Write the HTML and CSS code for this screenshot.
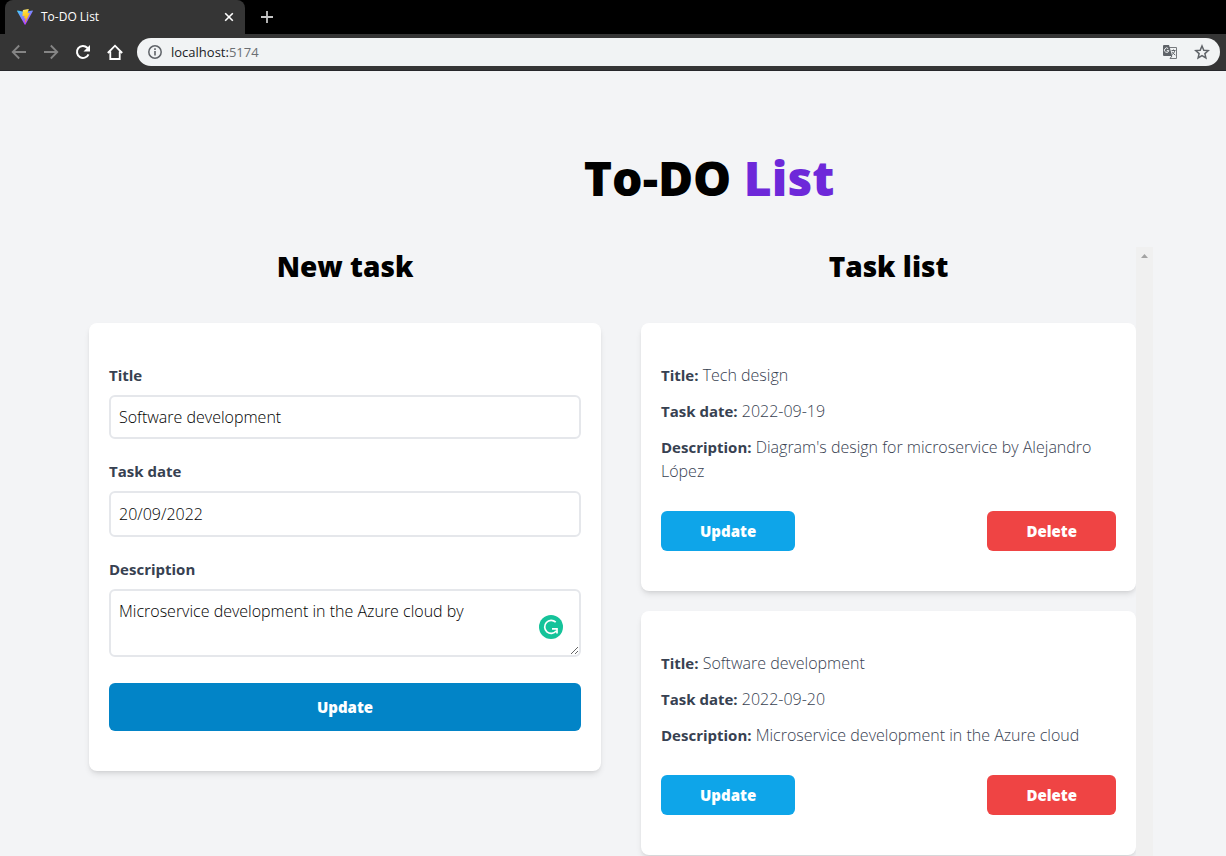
FILE: index.html
```html
<!DOCTYPE html>
<html lang="en">
<head>
<meta charset="utf-8">
<title>To-DO List</title>
<link rel="stylesheet" href="styles.css">
</head>
<body>
<header class="browser">
  <div class="tabs">
    <div class="tab">
      <svg class="tab-logo" width="16" height="16" viewBox="0 0 32 32" aria-hidden="true">
        <defs>
          <linearGradient id="v" x1="0" y1="0" x2="0.6" y2="1"><stop offset="0" stop-color="#41d1ff"/><stop offset="1" stop-color="#bd34fe"/></linearGradient>
          <linearGradient id="b" x1="0.4" y1="0" x2="0.6" y2="1"><stop offset="0" stop-color="#ffea83"/><stop offset="0.2" stop-color="#ffdd35"/><stop offset="1" stop-color="#ffa800"/></linearGradient>
        </defs>
        <path fill="url(#v)" d="M31.6 4.7 17 30.9a1 1 0 0 1-1.8 0L.3 4.7a1 1 0 0 1 1.1-1.5L16 5.8 30.500 3.200a1 1 0 0 1 1.100 1.500z"/>
        <path fill="url(#b)" d="M22.900 0 12.100 2.100a.5.5 0 0 0-.4.500L11 13.800a.5.5 0 0 0 .6.500l3-.7a.5.5 0 0 1 .6.600l-.9 4.400a.5.5 0 0 0 .6.600l1.900-.6a.5.5 0 0 1 .6.600l-1.400 6.900c-.1.400.5.700.8.300L25.300 8.800a.5.5 0 0 0-.5-.8l-3.100.6a.5.5 0 0 1-.6-.6L23.500.6a.5.5 0 0 0-.6-.6z"/>
      </svg>
      <span class="tab-title">To-DO List</span>
      <button class="icon-button tab-close" aria-label="Close tab">
        <svg width="10" height="10" viewBox="0 0 10 10"><path d="M1.200 1.200l7.600 7.600M8.800 1.200L1.200 8.800" stroke="#fff" stroke-width="1.600"/></svg>
      </button>
    </div>
    <button class="icon-button new-tab" aria-label="New tab">
      <svg width="12" height="12" viewBox="0 0 12 12"><path d="M6 0v12M0 6h12" stroke="#c4c4c4" stroke-width="1.800"/></svg>
    </button>
  </div>
  <nav class="toolbar">
    <button class="icon-button" aria-label="Back"><svg width="16" height="16" viewBox="0 0 16 16" fill="none" stroke="#858585" stroke-width="1.800"><path d="M15 8H2M8.200 1.500L1.700 8l6.500 6.500"/></svg></button>
    <button class="icon-button" aria-label="Forward"><svg width="16" height="16" viewBox="0 0 16 16" fill="none" stroke="#858585" stroke-width="1.800"><path d="M1 8h13M7.800 1.500L14.300 8l-6.500 6.500"/></svg></button>
    <button class="icon-button" aria-label="Reload"><svg width="16" height="16" viewBox="0 0 16 16"><path d="M13.500 10.300A6 6 0 1 1 12.300 3.800L14 5.500" fill="none" stroke="#fff" stroke-width="2"/><path d="M15 1v6.500H8.500z" fill="#fff"/></svg></button>
    <button class="icon-button" aria-label="Home"><svg width="16" height="16" viewBox="0 0 16 16" fill="none" stroke="#fff" stroke-width="1.800"><path d="M.8 9L8 1.700 15.200 9M3.300 7.500V15h9.400V7.500"/></svg></button>
    <div class="address">
      <svg width="14" height="14" viewBox="0 0 14 14" aria-hidden="true"><circle cx="7" cy="7" r="6.200" fill="none" stroke="#5f6368" stroke-width="1.500"/><path d="M7 6v4.500M7 3.300v1.600" stroke="#5f6368" stroke-width="1.600"/></svg>
      <span class="url">localhost:<span class="port">5174</span></span>
      <button class="icon-button" aria-label="Translate this page">
        <svg width="14" height="14" viewBox="0 0 14 14"><path d="M6 2.500h7.500v11H7" fill="none" stroke="#777a7e"/><path d="M1 0h5l3.200 11H1a1 1 0 0 1-1-1V1a1 1 0 0 1 1-1z" fill="#5f6368"/><path d="M5.200 3.600a2.200 2.200 0 1 0 .6 2H3.800" fill="none" stroke="#f1f3f4"/><path d="M8.500 5.500h4M10.500 4.500v1M11.800 5.500c-.4 2-1.300 3-2.600 4M9.300 6.800c.6 1.300 1.600 2.500 3 3.300M7 13.500L9 11" fill="none" stroke="#5f6368"/></svg>
      </button>
      <button class="icon-button" aria-label="Bookmark this page">
        <svg width="16" height="16" viewBox="0 0 16 16"><path d="M8 2l1.800 4.200 4.500.4-3.400 3 1 4.400L8 11.700 4.100 14l1-4.400-3.400-3 4.500-.4z" fill="none" stroke="#5f6368" stroke-width="1.500"/></svg>
      </button>
    </div>
  </nav>
</header>

<main class="page">
  <h1 class="page-title">To-DO <span class="accent">List</span></h1>
  <div class="columns">
    <section class="column">
      <h2 class="column-title">New task</h2>
      <form class="card">
        <div class="field">
          <label class="label" for="title">Title</label>
          <input class="control" id="title" type="text" value="Software development">
        </div>
        <div class="field">
          <label class="label" for="date">Task date</label>
          <input class="control control-date" id="date" type="text" value="20/09/2022">
        </div>
        <div class="field field-description">
          <label class="label" for="description">Description</label>
          <textarea class="control control-area" id="description" rows="2" spellcheck="false">Microservice development in the Azure cloud by</textarea>
          <svg class="checker" width="24" height="24" viewBox="0 0 24 24" aria-hidden="true"><circle cx="12" cy="12" r="12" fill="#15c39a"/><path d="M16.700 7.200A6.500 6.500 0 1 0 17.200 16M13 13.800h5v4.700" fill="none" stroke="#fff" stroke-width="1.700"/></svg>
        </div>
        <button class="button submit" type="button">Update</button>
      </form>
    </section>
    <section class="column list-column">
      <div class="list">
        <h2 class="column-title">Task list</h2>
        <article class="card task">
          <p class="line"><strong>Title:</strong> Tech design</p>
          <p class="line"><strong>Task date:</strong> 2022-09-19</p>
          <p class="line"><strong>Description:</strong> Diagram's design for microservice by Alejandro López</p>
          <div class="actions"><button class="button update">Update</button><button class="button delete">Delete</button></div>
        </article>
        <article class="card task">
          <p class="line"><strong>Title:</strong> Software development</p>
          <p class="line"><strong>Task date:</strong> 2022-09-20</p>
          <p class="line"><strong>Description:</strong> Microservice development in the Azure cloud</p>
          <div class="actions"><button class="button update">Update</button><button class="button delete">Delete</button></div>
        </article>
      </div>
      <div class="scrollbar" aria-hidden="true"><svg width="7" height="4" viewBox="0 0 7 4"><path d="M0 4L3.500 0 7 4z" fill="#a3a3a3"/></svg></div>
    </section>
  </div>
</main>
</body>
</html>
```
FILE: styles.css
```css
* { box-sizing: border-box; }

body {
  display: flex;
  flex-direction: column;
  height: 100vh;
  margin: 0;
  overflow: hidden;
  background: #f3f4f6;
  color: #000;
  font-family: "Open Sans", "Noto Sans", sans-serif;
  font-size: 15px;
  line-height: 24px;
}

h1, h2, p { margin: 0; }

button, input, textarea { font: inherit; }

svg { display: block; flex: none; }

.icon-button {
  display: flex;
  padding: 0;
  border: 0;
  background: none;
}

/* Browser frame */
.browser {
  flex: none;
  background: #000;
  font-size: 12px;
}

.tabs {
  display: flex;
  align-items: center;
  gap: 16px;
  height: 34px;
  padding-left: 5px;
}

.tab {
  display: flex;
  align-items: center;
  gap: 8px;
  width: 240px;
  height: 34px;
  padding: 0 11px 0 12px;
  border-radius: 8px 8px 0 0;
  background: #353535;
  color: #fff;
}

.tab-title { flex: 1; }

.toolbar {
  display: flex;
  align-items: center;
  gap: 16px;
  height: 37px;
  padding: 0 6px 0 11px;
  border-bottom: 1px solid #27272b;
  background: #353535;
}

.address {
  display: flex;
  flex: 1;
  align-items: center;
  gap: 17px;
  height: 28px;
  margin-left: -2px;
  padding: 0 10px 0 11px;
  border-radius: 14px;
  background: #f1f3f4;
  color: #202124;
  font-size: 13px;
}

.url {
  flex: 1;
  margin-left: -8px;
}

.port { color: #6b6f73; }

/* Page */
.page {
  display: flex;
  flex: 1;
  flex-direction: column;
  min-height: 0;
  padding: 79px 73px 0 89px;
}

.page-title {
  padding-left: 176px;
  font-size: 48px;
  font-weight: 800;
  line-height: 56px;
  text-align: center;
}

.accent { color: #6d28d9; }

.columns {
  display: grid;
  flex: 1;
  grid-template-rows: minmax(0, 1fr);
  grid-template-columns: 1fr 1fr;
  gap: 40px;
  min-height: 0;
  margin-top: 41px;
}

.column { min-width: 0; }

.column-title {
  margin-bottom: 38px;
  font-size: 28px;
  font-weight: 800;
  line-height: 38px;
  text-align: center;
}

.card {
  padding: 40px 20px;
  border-radius: 8px;
  background: #fff;
  box-shadow: 0 4px 6px -1px rgba(0, 0, 0, 0.1), 0 2px 4px -2px rgba(0, 0, 0, 0.1);
}

.field {
  position: relative;
  margin-bottom: 20px;
}

.field-description { margin-bottom: 26px; }

.label {
  display: block;
  margin-bottom: 8px;
  color: #374151;
  font-weight: 700;
}

.control {
  display: block;
  width: 100%;
  height: 44px;
  padding: 8px;
  border: 2px solid #e5e7eb;
  border-radius: 6px;
  background: #fff;
  color: #000;
  font-size: 16px;
  font-weight: 300;
}

.control-date { height: 46px; }

.control-area {
  height: 68px;
  resize: vertical;
}

.checker {
  position: absolute;
  right: 18px;
  bottom: 18px;
}

.button {
  padding: 8px 39px;
  border: 0;
  border-radius: 6px;
  color: #fff;
  font-weight: 800;
}

.submit {
  display: block;
  width: 100%;
  padding: 12px;
  background: #0284c7;
}

.update { background: #0ea5e9; }

.delete { background: #ef4444; }

.list-column { display: flex; }

.list {
  flex: 1;
  min-height: 0;
}

.task + .task { margin-top: 20px; }

.line {
  margin-bottom: 12px;
  color: #374151;
  font-size: 16px;
  font-weight: 300;
}

.line strong {
  font-size: 15px;
  font-weight: 700;
}

.actions {
  display: flex;
  justify-content: space-between;
  margin-top: 28px;
}

.scrollbar {
  display: flex;
  justify-content: center;
  width: 17px;
  padding-top: 7px;
  background: #f0f0f0;
}
```
